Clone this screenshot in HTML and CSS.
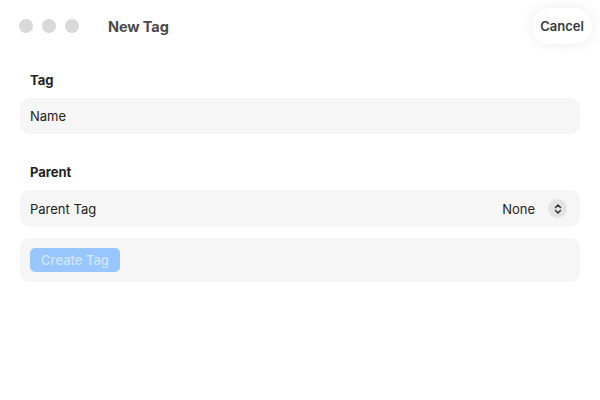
FILE: index.html
```html
<!DOCTYPE html>
<html>
<head>
<meta charset="utf-8">
<link rel="stylesheet" href="styles.css">
</head>
<body>
<div class="window">
  <header class="titlebar">
    <div class="lights">
      <span class="light"></span>
      <span class="light"></span>
      <span class="light"></span>
    </div>
    <div class="title">New Tag</div>
    <button class="cancel">Cancel</button>
  </header>
  <main class="content">
    <div class="section-label">Tag</div>
    <div class="field">Name</div>
    <div class="section-label parent-label">Parent</div>
    <div class="field row">
      <span>Parent Tag</span>
      <span class="picker">
        <span class="picker-value">None</span>
        <span class="stepper">
          <svg width="10" height="12" viewBox="0 0 10 12" fill="none" stroke="#333" stroke-width="1.5" stroke-linecap="round" stroke-linejoin="round">
            <path d="M2.5 4.5 L5 2 L7.5 4.5"/>
            <path d="M2.5 7.5 L5 10 L7.5 7.5"/>
          </svg>
        </span>
      </span>
    </div>
    <div class="card">
      <button class="create">Create Tag</button>
    </div>
  </main>
</div>
</body>
</html>
```
FILE: styles.css
```css
* { box-sizing: border-box; }
html, body {
  margin: 0;
  padding: 0;
  background: #ffffff;
}
body {
  font-family: Inter, "Noto Sans", "Liberation Sans", sans-serif;
  color: #222222;
  font-size: 13px;
}
.window {
  width: 600px;
  height: 400px;
}
.titlebar {
  height: 52px;
  display: flex;
  align-items: center;
  padding: 0 8px 0 19px;
}
.lights {
  display: flex;
  gap: 9px;
}
.light {
  width: 14px;
  height: 14px;
  border-radius: 50%;
  background: #d9d9d9;
}
.title {
  margin-left: 29px;
  font-size: 14.5px;
  font-weight: 700;
  color: #4a4a4a;
  letter-spacing: -0.1px;
}
.cancel {
  margin-left: auto;
  width: 60px;
  height: 36px;
  border: none;
  border-radius: 18px;
  background: #ffffff;
  box-shadow: 0 0 14px rgba(0,0,0,0.08);
  font-family: inherit;
  font-size: 13px;
  font-weight: 600;
  color: #3a3a3a;
  padding: 0;
}
.content {
  padding: 0 20px;
}
.section-label {
  margin-top: 20px;
  padding-left: 10px;
  line-height: 16px;
  font-weight: 700;
  font-size: 13px;
  color: #222222;
  margin-bottom: 10px;
}
.parent-label {
  margin-top: 30px;
  margin-bottom: 10px;
}
.field {
  height: 36px;
  border-radius: 10px;
  background: #f6f6f6;
  padding: 0 10px;
  display: flex;
  align-items: center;
  font-size: 13px;
  color: #222222;
}
.row {
  height: 37px;
  justify-content: space-between;
  padding-right: 13px;
}
.picker {
  display: flex;
  align-items: center;
  gap: 13px;
}
.stepper {
  width: 19px;
  height: 19px;
  border-radius: 50%;
  background: #e4e4e4;
  display: flex;
  align-items: center;
  justify-content: center;
}
.card {
  margin-top: 11px;
  height: 44px;
  border-radius: 10px;
  background: #f6f6f6;
  padding: 10px;
}
.create {
  width: 90px;
  height: 24px;
  border: none;
  border-radius: 5px;
  background: #99c7fd;
  color: #cfe5fe;
  font-family: inherit;
  font-size: 13px;
  font-weight: 500;
  padding: 0;
}
```
